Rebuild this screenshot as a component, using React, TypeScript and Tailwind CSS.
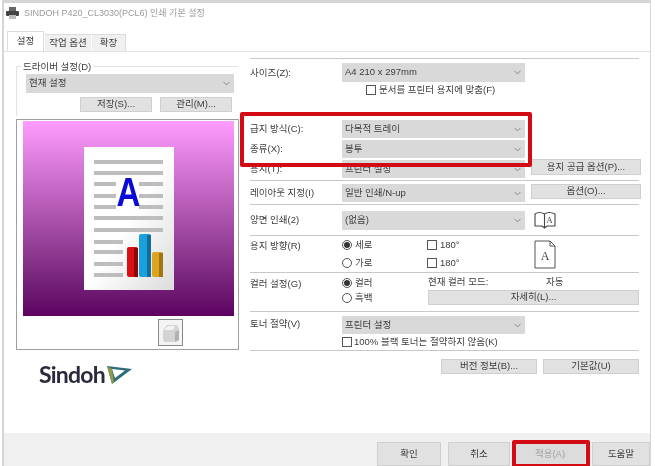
import React from "react";
import { ChevronDown } from "lucide-react";

const Select = ({ text, w = "w-[183px]", h = "h-[18px]" }: { text: string; w?: string; h?: string }) => (
  <div className={`${w} ${h} bg-[#d9d9d9] flex items-center justify-between pl-[3px] pr-[2px] text-[9.5px] text-[#3c3c3c] shrink-0`}>
    <span>{text}</span>
    <ChevronDown size={11} strokeWidth={1.5} className="text-[#666]" />
  </div>
);

const Btn = ({ text, cls }: { text: string; cls: string }) => (
  <div className={`${cls} bg-[#e1e1e1] border border-[#cfcfcf] flex items-center justify-center text-[9.5px] text-[#3c3c3c] shrink-0`}>{text}</div>
);

const Check = () => <span className="w-[10px] h-[10px] border border-[#555] bg-white shrink-0" />;

const Radio = ({ on }: { on?: boolean }) => (
  <span className="w-[10px] h-[10px] rounded-full border border-[#555] bg-white shrink-0 flex items-center justify-center">
    {on && <span className="w-[6px] h-[6px] rounded-full bg-[#333]" />}
  </span>
);

const Label = ({ text, cls = "" }: { text: string; cls?: string }) => (
  <div className={`w-[92px] shrink-0 text-[9.5px] text-[#3c3c3c] ${cls}`}>{text}</div>
);

const Sep = () => <div className="h-[1px] bg-[#c8c8c8] shrink-0" />;

function PagePreview() {
  const lines: [number, number, number][] = [
    [13, 10, 69], [24, 10, 69], [35, 10, 22], [35, 55, 24], [47, 10, 22], [47, 55, 24],
    [58, 10, 22], [58, 55, 24], [69, 10, 69], [81, 10, 69], [93, 10, 29], [103, 10, 29], [115, 10, 29], [126, 10, 29],
  ];
  return (
    <div className="relative w-[90px] h-[143px] bg-linear-to-br from-white via-white to-[#dcdcdc]">
      <svg width="90" height="143" viewBox="0 0 90 143" className="block">
        {lines.map(([y, x, w], i) => (
          <rect key={i} x={x} y={y} width={w} height="4" fill="#bdbdbd" />
        ))}
        <text transform="translate(44.500 59) scale(0.92 1.13)" textAnchor="middle" fontFamily="Liberation Sans" fontWeight="700" fontSize="36" fill="#0a0ad8">A</text>
        <rect x="43" y="100" width="11" height="30" rx="2" fill="#d80f14" />
        <rect x="50" y="101" width="4" height="29" fill="#8d0608" />
        <rect x="55" y="87" width="12" height="43" rx="2" fill="#1aa0dc" />
        <rect x="63" y="88" width="4" height="42" fill="#146c98" />
        <rect x="68" y="105" width="11" height="25" rx="2" fill="#dca51e" />
        <rect x="75" y="106" width="4" height="24" fill="#a07612" />
      </svg>
    </div>
  );
}

export default function App() {
  return (
    <div
      className="relative w-[655px] h-[466px] overflow-hidden bg-white flex flex-col blur-[0.6px]"
      style={{ fontFamily: '"Liberation Sans", "Noto Sans CJK KR", sans-serif' }}
    >
      <div className="ml-[2px] mr-[4px] flex-1 flex flex-col border-l-[2px] border-r border-t-[3px] border-[#d6d6d6] min-h-0">
        {/* title */}
        <div className="h-[21px] flex items-center gap-[5px] pl-[2px] text-[9px] text-[#9a9a9a] shrink-0">
          <svg width="13" height="13" viewBox="0 0 13 13">
            <rect x="3" y="0" width="7" height="5" fill="#666" />
            <rect x="0" y="4" width="13" height="5" rx="1" fill="#444" />
            <rect x="3" y="8" width="7" height="4" fill="#bbb" />
          </svg>
          <span>SINDOH P420_CL3030(PCL6) 인쇄 기본 설정</span>
        </div>
        {/* tabs */}
        <div className="h-[28px] shrink-0 flex items-end pl-[3px] text-[9.5px] text-[#3c3c3c] border-b border-[#e2e2e2]">
          <div className="w-[37px] h-[20px] flex items-center justify-center bg-white border border-b-0 border-[#dcdcdc]">설정</div>
          <div className="w-[46px] h-[17px] ml-[1px] flex items-center justify-center bg-[#f0f0f0] border-t border-[#dcdcdc]">작업 옵션</div>
          <div className="w-[34px] h-[17px] ml-[1px] flex items-center justify-center bg-[#f0f0f0] border-t border-r border-[#dcdcdc]">확장</div>
        </div>
        {/* body */}
        <div className="flex-1 flex min-h-0">
          {/* left */}
          <div className="w-[241px] shrink-0 pl-[12px] pt-[14px]">
            <div className="relative w-[222px] h-[50px] border border-[#e2e2e2] border-r-0 border-b-0 pl-[9px] pt-[7px]">
              <span className="absolute left-[4px] -top-[7px] bg-white px-[2px] text-[9.5px] text-[#3c3c3c]">드라이버 설정(D)</span>
              <Select text="현재 설정" w="w-[208px]" h="h-[19px]" />
              <div className="flex gap-[8px] pl-[54px] mt-[4px]">
                <Btn text="저장(S)..." cls="w-[72px] h-[15px]" />
                <Btn text="관리(M)..." cls="w-[72px] h-[15px]" />
              </div>
            </div>
            <div className="w-[223px] h-[231px] mt-[3px] border border-[#a0a0a0] pl-[6px] pt-[1px]">
              <div className="w-[211px] h-[195px] bg-linear-to-b from-[#ff9cff] to-[#5c0060] flex items-start justify-center pt-[26px]">
                <PagePreview />
              </div>
              <div className="flex justify-end pr-[55px] mt-[3px]">
                <div className="w-[25px] h-[27px] border border-[#888] bg-[#f4f4f4] flex items-center justify-center">
                  <svg width="19" height="20" viewBox="0 0 19 20">
                    <path d="M2 7 L6 2 H16 L18 6 V17 L14 19 H3 L2 16 Z" fill="#d4d4d4" />
                    <path d="M3 7 L7 3 H14 L12 7 Z" fill="#f4f4f4" />
                    <path d="M14 9 V19 L18 17 V7 Z" fill="#b0b0b0" />
                  </svg>
                </div>
              </div>
            </div>
            <div className="flex items-center gap-[2px] pl-[23px] mt-[11px]">
              <span className="text-[23px] leading-[26px] font-bold text-[#2a2a3c] tracking-[-0.8px]" style={{ fontFamily: 'Lato, sans-serif' }}>Sindoh</span>
              <svg width="25" height="19" viewBox="0 0 25 19">
                <path d="M0 1 L25 4 L5 19 Z" fill="#2f6d7a" />
                <path d="M5 4 L18 5.500 L8 13 Z" fill="#ffffff" />
                <path d="M0 1 L5 4 L7 16 L5 19 Z" fill="#8f9a4a" />
              </svg>
            </div>
          </div>
          {/* right */}
          <div className="w-[389px] shrink-0 ml-[5px] pt-[6px] flex flex-col">
            <Sep />
            <div className="h-[55px] pt-[4px] flex shrink-0">
              <Label text="사이즈(Z):" cls="pt-[3px]" />
              <div>
                <Select text="A4 210 x 297mm" h="h-[19px]" />
                <div className="flex items-center gap-[3px] pl-[24px] mt-[1px] text-[9.5px] text-[#3c3c3c]">
                  <Check />
                  <span>문서를 프린터 용지에 맞춤(F)</span>
                </div>
              </div>
            </div>
            <div className="h-[66px] pt-[6px] flex flex-col gap-[2px] shrink-0">
              <div className="flex items-center"><Label text="급지 방식(C):" /><Select text="다목적 트레이" /></div>
              <div className="flex items-center"><Label text="종류(X):" /><Select text="봉투" /></div>
              <div className="flex items-start">
                <Label text="용지(T):" cls="pt-[2px]" />
                <Select text="프린터 설정" />
                <Btn text="용지 공급 옵션(P)..." cls="w-[110px] h-[16px] ml-[6px] -mt-[1px]" />
              </div>
            </div>
            <Sep />
            <div className="h-[23px] flex items-start pt-[3px] shrink-0">
              <Label text="레이아웃 지정(I)" cls="pt-[2px]" />
              <Select text="일반 인쇄/N-up" />
              <Btn text="옵션(O)..." cls="w-[110px] h-[15px] ml-[6px]" />
            </div>
            <Sep />
            <div className="h-[30px] flex items-start pt-[6px] shrink-0">
              <Label text="양면 인쇄(2)" cls="pt-[2px]" />
              <Select text="(없음)" h="h-[19px]" />
              <svg width="22" height="18" viewBox="0 0 22 18" className="ml-[9px]">
                <path d="M1 15 V3 Q5 0 10.500 3 Q15 0 21 3 V15 H13 L10.500 17 L8 15 Z M10.500 3 V16" fill="none" stroke="#444" strokeWidth="1.100" />
                <text x="15.500" y="12" textAnchor="middle" fontFamily="Liberation Serif" fontSize="9" fill="#444">A</text>
              </svg>
            </div>
            <Sep />
            <div className="h-[36px] flex shrink-0">
              <Label text="용지 방향(R)" cls="pt-[3px]" />
              <div className="w-[85px] flex flex-col gap-[3.5px] text-[9.5px] text-[#3c3c3c] pt-[2px]">
                <div className="flex items-center gap-[3px]"><Radio on /><span>세로</span></div>
                <div className="flex items-center gap-[3px]"><Radio /><span>가로</span></div>
              </div>
              <div className="w-[107px] flex flex-col gap-[3.5px] text-[9.5px] text-[#3c3c3c] pt-[2px]">
                <div className="flex items-center gap-[3px]"><Check /><span>180°</span></div>
                <div className="flex items-center gap-[3px]"><Check /><span>180°</span></div>
              </div>
              <svg width="22" height="29" viewBox="0 0 22 29" className="mt-[4px]">
                <path d="M1 1 H16 L21 6 V28 H1 Z M16 1 V6 H21" fill="#fff" stroke="#555" strokeWidth="1" />
                <text x="11" y="20" textAnchor="middle" fontFamily="Liberation Serif" fontSize="12" fill="#444">A</text>
              </svg>
            </div>
            <Sep />
            <div className="h-[38px] flex shrink-0">
              <Label text="컬러 설정(G)" cls="pt-[4px]" />
              <div className="w-[86px] flex flex-col gap-[0.5px] text-[9.5px] text-[#3c3c3c] pt-[3px]">
                <div className="flex items-center gap-[3px]"><Radio on /><span>컬러</span></div>
                <div className="flex items-center gap-[3px]"><Radio /><span>흑백</span></div>
              </div>
              <div className="w-[211px] text-[9.5px] text-[#3c3c3c] pt-[1px]">
                <div className="flex h-[16px] items-center">
                  <span className="w-[118px]">현재 컬러 모드:</span>
                  <span>자동</span>
                </div>
                <Btn text="자세히(L)..." cls="w-[211px] h-[15px]" />
              </div>
            </div>
            <Sep />
            <div className="h-[38px] flex pt-[4px] shrink-0">
              <Label text="토너 절약(V)" cls="pt-[1px]" />
              <div>
                <Select text="프린터 설정" />
                <div className="flex items-center gap-[2px] mt-[1px] text-[9.5px] text-[#3c3c3c]">
                  <Check />
                  <span>100% 블랙 토너는 절약하지 않음(K)</span>
                </div>
              </div>
            </div>
            <Sep />
            <div className="flex justify-end gap-[6px] pt-[8px]">
              <Btn text="버전 정보(B)..." cls="w-[96px] h-[15px]" />
              <Btn text="기본값(U)" cls="w-[96px] h-[15px]" />
            </div>
          </div>
        </div>
        {/* footer */}
        <div className="h-[33px] shrink-0 bg-[#f0f0f0] flex justify-end items-start pt-[9px]">
          <Btn text="확인" cls="w-[64px] h-[24px]" />
          <Btn text="취소" cls="w-[62px] h-[24px] ml-[7px]" />
          <div className="w-[70px] h-[24px] ml-[5px] bg-[#dcdcdc] flex items-center justify-center text-[9.5px] text-[#a0a0a0]">적용(A)</div>
          <Btn text="도움말" cls="w-[58px] h-[24px] ml-[7px]" />
        </div>
      </div>
      {/* highlights */}
      <div className="absolute left-[240px] top-[112px] w-[292px] h-[55px] border-[4px] border-[#d40b12] rounded-[2px]" />
      <div className="absolute left-[512px] top-[440px] w-[78px] h-[28px] border-[4px] border-[#d40b12] rounded-[2px]" />
    </div>
  );
}
